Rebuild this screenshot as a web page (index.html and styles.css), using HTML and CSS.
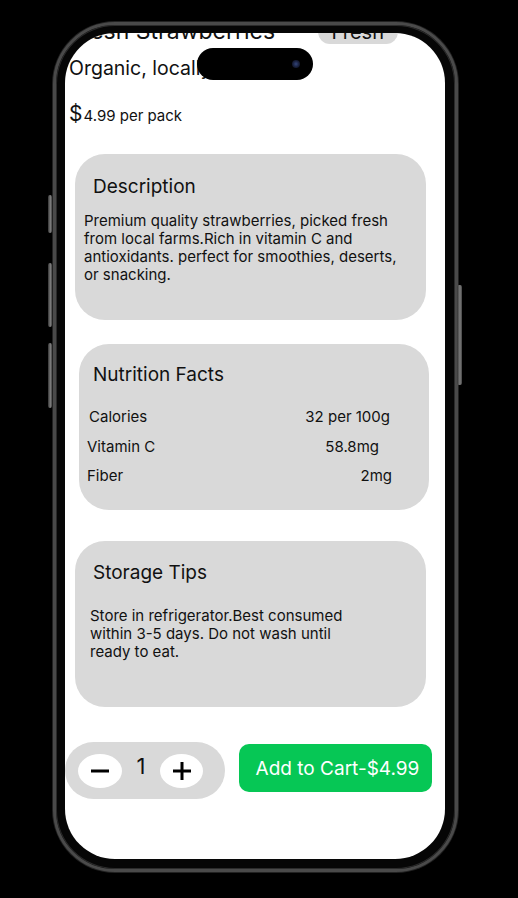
FILE: index.html
```html
<!DOCTYPE html>
<html lang="en">
<head>
<meta charset="utf-8">
<title>Fresh Strawberries</title>
<link rel="stylesheet" href="styles.css">
</head>
<body>
<div class="stage">
  <div class="phone">
    <span class="side-btn btn-action"></span>
    <span class="side-btn btn-vol-up"></span>
    <span class="side-btn btn-vol-down"></span>
    <span class="side-btn btn-power"></span>
    <div class="screen">
      <div class="island"><span class="camera"></span></div>
      <main class="content">
        <header class="head">
          <h1 class="title">Fresh Strawberries</h1>
          <span class="badge">Fresh</span>
        </header>
        <p class="subtitle">Organic, locally</p>
        <p class="price"><span class="cur">$</span>4.99 per pack</p>

        <section class="card card-desc">
          <h2 class="card-title">Description</h2>
          <p class="card-body">Premium quality strawberries, picked fresh from local farms.Rich in vitamin C and antioxidants. perfect for smoothies, deserts, or snacking.</p>
        </section>

        <section class="card card-nutrition">
          <h2 class="card-title">Nutrition Facts</h2>
          <div class="facts">
            <div class="fact fact-cal"><span>Calories</span><span>32 per 100g</span></div>
            <div class="fact fact-vit"><span>Vitamin C</span><span>58.8mg</span></div>
            <div class="fact fact-fib"><span>Fiber</span><span>2mg</span></div>
          </div>
        </section>

        <section class="card card-storage">
          <h2 class="card-title">Storage Tips</h2>
          <p class="card-body storage-body">Store in refrigerator.Best consumed within 3-5 days. Do not wash until ready to eat.</p>
        </section>

        <div class="actions">
          <div class="qty">
            <button class="qty-btn" aria-label="Decrease">
              <svg width="18" height="4" viewBox="0 0 18 4"><rect x="0" y="0.5" width="18" height="3" fill="#000"/></svg>
            </button>
            <span class="qty-count">1</span>
            <button class="qty-btn qty-plus" aria-label="Increase">
              <svg width="18" height="18" viewBox="0 0 18 18"><rect x="0" y="7.5" width="18" height="3" fill="#000"/><rect x="7.5" y="0" width="3" height="18" fill="#000"/></svg>
            </button>
          </div>
          <button class="cart-btn">Add to Cart-$4.99</button>
        </div>
      </main>
    </div>
  </div>
</div>
</body>
</html>
```

FILE: styles.css
```css
html, body {
  margin: 0;
  padding: 0;
}
body {
  background: #000;
  width: 518px;
  height: 898px;
  overflow: hidden;
  font-family: Inter, "Noto Sans", sans-serif;
  color: #111;
}
.stage {
  padding: 22px 0 0 53px;
}
.phone {
  position: relative;
  width: 405px;
  height: 850px;
  box-sizing: border-box;
  border: 3px solid #4a4a4a;
  border-radius: 62px;
  background: #060606;
  padding: 8px 10px 10px 9px;
  box-shadow: 0 0 0 1px #222, inset 0 0 0 1px #2b2b2b;
}
.side-btn {
  position: absolute;
  width: 4px;
  border-radius: 2px;
  background: linear-gradient(90deg, #333, #7e7e7e 60%, #444);
}
.btn-action { left: -8px; top: 170px; height: 38px; }
.btn-vol-up { left: -8px; top: 238px; height: 64px; }
.btn-vol-down { left: -8px; top: 318px; height: 65px; }
.btn-power { right: -7px; top: 260px; height: 100px; width: 5px; }

.screen {
  position: relative;
  width: 380px;
  height: 826px;
  background: #fff;
  border-radius: 50px;
  overflow: hidden;
}
.island {
  position: absolute;
  left: 132px;
  top: 15px;
  width: 116px;
  height: 32px;
  border-radius: 16px;
  background: #000;
  z-index: 5;
}
.camera {
  position: absolute;
  left: 95px;
  top: 12px;
  width: 8px;
  height: 8px;
  border-radius: 50%;
  background: radial-gradient(circle, #33457a 0%, #1a2240 50%, #05070f 100%);
}

.content {
  display: flex;
  flex-direction: column;
  margin-top: -15px;
}
.head {
  display: flex;
  justify-content: space-between;
  align-items: baseline;
  padding: 0 47px 0 4px;
}
.title {
  margin: 0;
  font-size: 23px;
  font-weight: 400;
  line-height: 26px;
}
.badge {
  display: inline-block;
  background: #d9d9d9;
  border-radius: 12px;
  padding: 0 14px;
  font-size: 20px;
  line-height: 24px;
  height: 24px;
}
.subtitle {
  margin: 12px 0 0 4px;
  font-size: 19.5px;
  line-height: 24px;
}
.price {
  margin: 21px 0 0 4px;
  font-size: 15px;
  line-height: 26px;
}
.cur {
  font-size: 21px;
  margin-right: 1px;
}

.card {
  background: #d9d9d9;
  border-radius: 30px;
  height: 166px;
  box-sizing: border-box;
}
.card-title {
  margin: 0;
  font-size: 19px;
  font-weight: 400;
  line-height: 24px;
}
.card-body {
  margin: 0;
  font-size: 15px;
  line-height: 18px;
}
.card-desc {
  margin: 25px 0 0 10px;
  width: 351px;
  padding: 21px 20px 0 9px;
}
.card-desc .card-title {
  padding-left: 9px;
}
.card-desc .card-body {
  margin-top: 13px;
}

.card-nutrition {
  margin: 24px 0 0 14px;
  width: 350px;
  padding: 19px 0 0 0;
}
.card-nutrition .card-title {
  padding-left: 14px;
}
.facts {
  margin-top: 15px;
  display: flex;
  flex-direction: column;
}
.fact {
  display: flex;
  justify-content: space-between;
  font-size: 15px;
  line-height: 29.5px;
}
.fact-cal { padding: 0 39px 0 10px; }
.fact-vit { padding: 0 50px 0 8px; }
.fact-fib { padding: 0 37px 0 8px; }

.card-storage {
  margin: 31px 0 0 10px;
  width: 351px;
  padding: 20px 0 0 18px;
}
.storage-body {
  margin-top: 22px;
  margin-left: -3px;
  max-width: 272px;
}

.actions {
  display: flex;
  align-items: flex-start;
  gap: 14px;
  margin-top: 35px;
}
.qty {
  width: 160px;
  height: 57px;
  box-sizing: border-box;
  border-radius: 29px;
  background: #d9d9d9;
  display: flex;
  align-items: center;
  padding: 0 0 0 13px;
}
.qty-btn {
  width: 44px;
  height: 34px;
  border: none;
  border-radius: 50%;
  background: #fff;
  padding: 0;
  display: flex;
  align-items: center;
  justify-content: center;
}
.qty-plus {
  width: 43px;
}
.qty-count {
  width: 38px;
  text-align: center;
  font-size: 22px;
  line-height: 26px;
  padding-bottom: 10px;
}
.cart-btn {
  margin-top: 2px;
  width: 193px;
  height: 48px;
  border: none;
  border-radius: 10px;
  background: #06c755;
  color: #fff;
  font-family: Inter, "Noto Sans", sans-serif;
  font-size: 19px;
  padding: 0 0 0 4px;
}
```
